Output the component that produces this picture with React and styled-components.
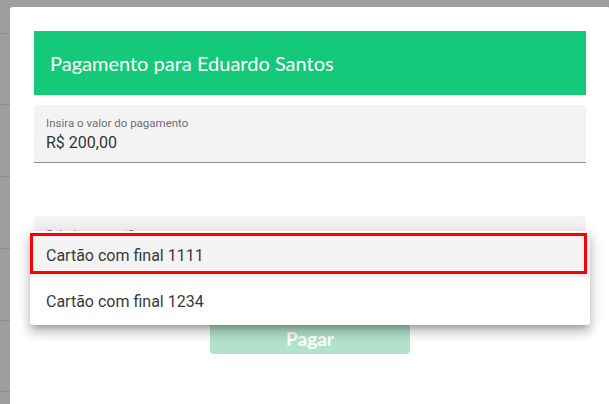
import React from "react";
import styled, { createGlobalStyle } from "styled-components";

const GlobalStyle = createGlobalStyle`
  html, body {
    margin: 0;
    padding: 0;
    width: 609px;
    height: 404px;
    overflow: hidden;
    background: #9e9e9e;
  }
  * { box-sizing: border-box; }
`;

const Page = styled.div`
  position: relative;
  width: 609px;
  height: 404px;
  overflow: hidden;
  background: #9e9e9e;
`;

const Backdrop = styled.div`
  display: flex;
  flex-direction: column;
`;

const BackRow = styled.div`
  height: ${(p) => p.h}px;
  border-bottom: 1px solid #8c8c8c;
`;

const Modal = styled.div`
  position: absolute;
  top: 7px;
  left: 10px;
  width: 600px;
  height: 420px;
  background: #fff;
  border-radius: 3px;
  padding: 24px;
  display: flex;
  flex-direction: column;
`;

const Header = styled.div`
  height: 64px;
  background: #14c979;
  display: flex;
  align-items: center;
  padding: 0 16px;
  color: #fff;
  font-family: Lato, "Noto Sans", sans-serif;
  font-size: 20px;
  font-weight: 400;
`;

const Field = styled.div`
  margin-top: ${(p) => p.mt}px;
  height: 58px;
  background: #f3f3f3;
  border-radius: 4px 4px 0 0;
  border-bottom: 1px solid ${(p) => (p.focused ? "#f3f3f3" : "#8c8c8c")};
  padding: 10px 12px 0;
  font-family: Roboto, "Liberation Sans", sans-serif;
`;

const Label = styled.div`
  font-size: 11.5px;
  color: ${(p) => (p.focused ? "#5c6bc0" : "#6f6f6f")};
  line-height: 16px;
`;

const Value = styled.div`
  font-size: 16px;
  color: #333;
  line-height: 22px;
  margin-top: 1px;
`;

const PayButton = styled.button`
  align-self: center;
  margin-top: 42px;
  width: 200px;
  height: 38px;
  border: none;
  border-radius: 4px;
  background: #b2e2cc;
  color: #fff;
  font-family: Lato, "Noto Sans", sans-serif;
  font-size: 19px;
  font-weight: 700;
  padding: 6px 0 0;
`;

const Menu = styled.ul`
  position: absolute;
  top: 224px;
  left: 20px;
  width: 560px;
  margin: 0;
  padding: 1px 0;
  list-style: none;
  background: #fff;
  border-radius: 4px;
  box-shadow: 0 5px 5px -3px rgba(0,0,0,0.2), 0 8px 10px 1px rgba(0,0,0,0.14), 0 3px 14px 2px rgba(0,0,0,0.12);
`;

const MenuItem = styled.li`
  position: relative;
  height: 46px;
  display: flex;
  align-items: center;
  padding: 0 16px;
  background: ${(p) => (p.active ? "#f3f3f3" : "#fff")};
  font-family: Roboto, "Liberation Sans", sans-serif;
  font-size: 16px;
  color: #3a3a3a;
`;

const Highlight = styled.span`
  position: absolute;
  left: 0;
  right: 3px;
  top: 1px;
  height: 41px;
  border: 3px solid #ff0000;
  pointer-events: none;
`;

export default function App() {
  const rows = [34, 71, 72, 72, 72, 71];
  const cards = ["1111", "1234"];

  return (
    <>
      <GlobalStyle />
      <Page>
        <Backdrop>
          {rows.map((h, i) => (
            <BackRow key={i} h={h} />
          ))}
        </Backdrop>
        <Modal>
          <Header>Pagamento para Eduardo Santos</Header>
          <Field mt={10}>
            <Label>Insira o valor do pagamento</Label>
            <Value>R$ 200,00</Value>
          </Field>
          <Field mt={53} focused>
            <Label focused>Selecione o cartão</Label>
          </Field>
          <PayButton disabled>Pagar</PayButton>
          <Menu>
            {cards.map((c, i) => (
              <MenuItem key={c} active={i === 0}>
                Cartão com final {c}
                {i === 0 && <Highlight />}
              </MenuItem>
            ))}
          </Menu>
        </Modal>
      </Page>
    </>
  );
}
